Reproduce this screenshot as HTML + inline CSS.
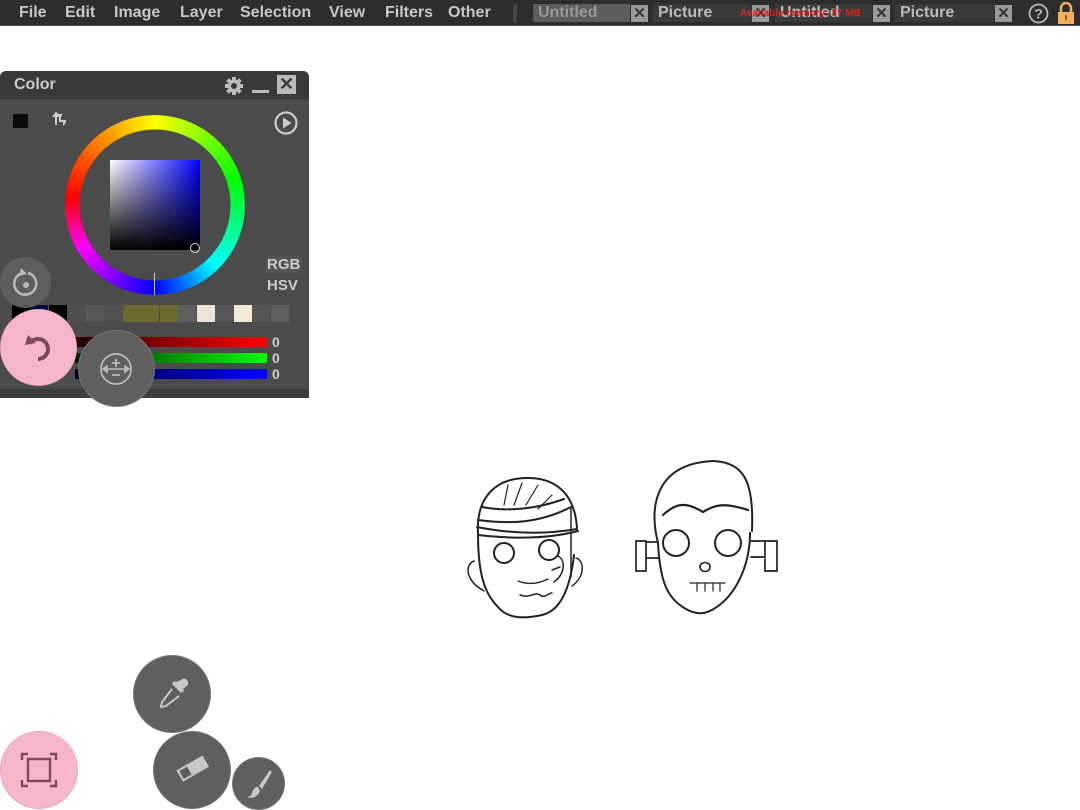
<!DOCTYPE html>
<html><head><meta charset="utf-8"><style>
*{margin:0;padding:0;box-sizing:border-box}
body{width:1080px;height:810px;background:#fff;position:relative;overflow:hidden;font-family:"Liberation Sans",sans-serif}
.bar{position:absolute;left:0;top:0;width:1080px;height:26px;background:#2d2d2d;border-bottom:1px solid #555}
.m{position:absolute;top:4px;color:#c8c8c8;font-size:16px;font-weight:bold}
.tab{position:absolute;top:4px;height:18px;color:#bbb;font-size:16px;font-weight:bold;padding-left:5px;line-height:18px}
.x{position:absolute;top:5px;width:17px;height:17px;background:#9a9a9a;color:#333;font-size:15px;line-height:17px;text-align:center;font-weight:bold}
.panel{position:absolute;left:0;top:71px;width:309px;height:327px;background:#4b4b4b;border-radius:6px 6px 0 0}
.ph{position:absolute;left:0;top:0;width:309px;height:28px;background:#393939;border-radius:6px 6px 0 0}
.c{position:absolute;border-radius:50%}
.sw{position:absolute;top:305px;width:18px;height:17px}
.sl{position:absolute;left:75px;width:192px;height:10px}
.n{position:absolute;left:272px;color:#ccc;font-size:14px;font-weight:bold}
</style></head><body>
<div class="bar">
<span class="m" style="left:19px">File</span>
<span class="m" style="left:65px">Edit</span>
<span class="m" style="left:114px">Image</span>
<span class="m" style="left:180px">Layer</span>
<span class="m" style="left:240px">Selection</span>
<span class="m" style="left:329px">View</span>
<span class="m" style="left:385px">Filters</span>
<span class="m" style="left:448px">Other</span>
<div style="position:absolute;left:513px;top:4px;width:4px;height:18px;background:#444"></div>
<div class="tab" style="left:533px;width:97px;background:#5c5c5c;color:#999">Untitled</div><div class="x" style="left:631px">✕</div>
<div class="tab" style="left:653px;width:98px;background:#3a3a3a">Picture</div><div class="x" style="left:752px">✕</div>
<div class="tab" style="left:775px;width:97px;background:#3a3a3a">Untitled</div><div class="x" style="left:873px">✕</div>
<div class="tab" style="left:895px;width:99px;background:#3a3a3a">Picture</div><div class="x" style="left:995px">✕</div>
<span style="position:absolute;left:740px;top:8px;color:#d22;font-size:10px;font-weight:bold">Available memory: 37 MB</span>
<svg style="position:absolute;left:1028px;top:3px" width="21" height="21"><circle cx="10.5" cy="10.5" r="9" fill="none" stroke="#bbb" stroke-width="1.8"/><text x="10.5" y="15.5" font-size="14" font-weight="bold" fill="#bbb" text-anchor="middle" font-family="Liberation Sans">?</text></svg>
<svg style="position:absolute;left:1057px;top:2px" width="18" height="22"><path d="M4 10V6a5 5 0 0 1 10 0v4" fill="none" stroke="#f0b060" stroke-width="2.5"/><rect x="1" y="10" width="16" height="12" fill="#f0b060"/><rect x="8" y="13" width="2" height="5" fill="#a06020"/></svg>
</div>

<div class="panel">
<div class="ph"></div>
<span style="position:absolute;left:14px;top:5px;color:#ccc;font-size:16px;font-weight:bold">Color</span>
<svg style="position:absolute;left:224px;top:5px" width="20" height="20" viewBox="0 0 20 20"><g fill="#bbb"><circle cx="10" cy="10" r="6.5"/><rect x="8" y="1" width="4" height="18"/><rect x="1" y="8" width="18" height="4"/><rect x="8" y="1" width="4" height="18" transform="rotate(45 10 10)"/><rect x="8" y="1" width="4" height="18" transform="rotate(-45 10 10)"/></g><circle cx="10" cy="10" r="3" fill="#393939"/></svg>
<div style="position:absolute;left:252px;top:19px;width:17px;height:3px;background:#bbb"></div>
<div style="position:absolute;left:277px;top:4px;width:19px;height:19px;background:#bbb;color:#393939;font-size:18px;line-height:19px;text-align:center;font-weight:bold">✕</div>
<div style="position:absolute;left:13px;top:43px;width:15px;height:14px;background:#0a0a0a"></div>
<svg style="position:absolute;left:52px;top:40px" width="18" height="16"><path d="M4 14V4h6M4 2L2 5h4zM8 4v6h6" fill="none" stroke="#ccc" stroke-width="2"/><path d="M14 12l-3-3v6z" fill="#ccc"/></svg>
<svg style="position:absolute;left:273px;top:39px" width="26" height="26"><circle cx="13" cy="13" r="10.5" fill="none" stroke="#ccc" stroke-width="2.2"/><path d="M10 7.5v11l8.5-5.5z" fill="#ccc"/></svg>
<div class="c" style="left:65px;top:44px;width:180px;height:180px;background:conic-gradient(#ff0 0deg,#0f0 72deg,#0ff 135deg,#00f 180deg,#f0f 240deg,#f00 275deg,#f80 320deg,#ff0 360deg);-webkit-mask:radial-gradient(circle,transparent 75px,#000 76px);mask:radial-gradient(circle,transparent 75px,#000 76px)"></div>
<div style="position:absolute;left:154px;top:202px;width:1px;height:22px;background:#ccc"></div>
<div style="position:absolute;left:110px;top:89px;width:90px;height:90px;background:linear-gradient(to bottom,transparent,#000),linear-gradient(to right,#fff,#00f)"></div>
<div class="c" style="left:190px;top:172px;width:10px;height:10px;border:1px solid #ddd"></div>
<span style="position:absolute;left:266px;top:185px;color:#ccc;font-size:15px;font-weight:bold;background:#555;padding:0 1px">RGB</span>
<span style="position:absolute;left:267px;top:206px;color:#ccc;font-size:15px;font-weight:bold">HSV</span>
<div class="sl" style="top:266px;background:linear-gradient(to right,#200,#f00)"></div>
<div class="sl" style="top:282px;background:linear-gradient(to right,#020,#0f0)"></div>
<div class="sl" style="top:298px;background:linear-gradient(to right,#002,#00f)"></div>
<span class="n" style="top:263px">0</span><span class="n" style="top:279px">0</span><span class="n" style="top:295px">0</span>
<div style="position:absolute;left:0;top:318px;width:309px;height:9px;background:#3c3c3c"></div>
</div>
<div class="sw" style="left:12px;background:#000"></div>
<div class="sw" style="left:30px;background:#0a0a40"></div>
<div class="sw" style="left:49px;background:#000"></div>
<div class="sw" style="left:67px;background:#4e4e4e"></div>
<div class="sw" style="left:86px;background:#585858"></div>
<div class="sw" style="left:104px;background:#525252"></div>
<div class="sw" style="left:123px;background:#6c6a2c"></div>
<div class="sw" style="left:141px;background:#6c6a2c"></div>
<div class="sw" style="left:160px;background:#6c6a2c"></div>
<div class="sw" style="left:178px;background:#5e5e5e"></div>
<div class="sw" style="left:197px;background:#efe2d6"></div>
<div class="sw" style="left:215px;background:#575757"></div>
<div class="sw" style="left:234px;background:#f5e8d4"></div>
<div class="sw" style="left:252px;background:#555"></div>
<div class="sw" style="left:271px;background:#5e5e5e"></div>

<!-- floating buttons -->
<div class="c" style="left:0;top:257px;width:51px;height:51px;background:rgba(95,95,95,.95)"></div>
<svg style="position:absolute;left:8px;top:265px" width="36" height="36"><path d="M12 9a11 11 0 1 0 8 -1" fill="none" stroke="#bbb" stroke-width="2.5"/><path d="M13 3l6 6-8 2z" fill="#bbb"/><circle cx="18" cy="20" r="3" fill="#bbb"/></svg>
<div class="c" style="left:0;top:309px;width:77px;height:77px;background:#f5b6cb;border:1px solid #e9a5bb"></div>
<svg style="position:absolute;left:22px;top:331px" width="34" height="34"><path d="M10 10a10 10 0 1 1 6 18" fill="none" stroke="#7a4a5c" stroke-width="4"/><path d="M3 14l3-10 8 8z" fill="#7a4a5c"/></svg>
<div class="c" style="left:78px;top:330px;width:77px;height:77px;background:#5f5f5f;border:1px solid #777"></div>
<svg style="position:absolute;left:96px;top:350px" width="40" height="38"><circle cx="20" cy="19" r="15" fill="none" stroke="#bbb" stroke-width="1.8"/><path d="M7 19h26M7 19l4-3v6zM33 19l-4-3v6z" stroke="#bbb" fill="#bbb" stroke-width="1.6"/><path d="M16 13h8M20 9v8M16 25h8" stroke="#bbb" stroke-width="1.8"/></svg>
<div class="c" style="left:133px;top:655px;width:78px;height:78px;background:#5f5f5f;border:1px solid #777"></div>
<svg style="position:absolute;left:155px;top:676px" width="36" height="36"><path d="M26 4a4 4 0 0 1 6 6l-4 3 1 2-3 2-9-9 2-3 2 1z" fill="#c8c8c8"/><path d="M17 13L7 26l-1 5 5-1 13-10" fill="none" stroke="#c8c8c8" stroke-width="2"/></svg>
<div class="c" style="left:0;top:731px;width:78px;height:78px;background:#f5b6cb;border:1px solid #e9a5bb"></div>
<svg style="position:absolute;left:20px;top:751px" width="38" height="38"><g fill="none" stroke="#7a4a5c" stroke-width="2.4"><path d="M2 9V3h6M30 3h6v6M36 29v6h-6M8 35H2v-6"/><rect x="8" y="8" width="22" height="22"/></g></svg>
<div class="c" style="left:153px;top:731px;width:78px;height:78px;background:#5f5f5f;border:1px solid #777"></div>
<svg style="position:absolute;left:174px;top:754px" width="38" height="30"><g transform="rotate(-30 19 15)"><rect x="4" y="8" width="30" height="13" fill="#c8c8c8"/><rect x="6" y="10" width="9" height="9" fill="#5f5f5f"/></g></svg>
<div class="c" style="left:232px;top:757px;width:53px;height:53px;background:#5f5f5f;border:1px solid #777"></div>
<svg style="position:absolute;left:244px;top:768px" width="30" height="32"><path d="M26 2L15 18l3 3L28 4z" fill="#c8c8c8"/><path d="M14 19c-4 0-5 3-6 6s-3 4-5 4c5 2 11 0 13-6z" fill="#c8c8c8"/></svg>

<!-- sketches -->
<svg style="position:absolute;left:460px;top:455px" width="330" height="170" viewBox="0 0 330 170" fill="none" stroke="#222" stroke-width="2" stroke-linecap="round">
<path d="M18 78C16 40 38 22 70 23c30 1 45 20 47 50"/>
<path d="M18 78c0 40 6 60 20 74 10 12 26 12 44 8 18-4 28-25 32-60"/>
<path d="M17 72c30 6 65 8 100 2M18 80c35 4 70 4 100-4M18 65c30 4 60 4 93 -13M22 52c25 5 55 2 82-8"/>
<path d="M48 30l-4 20M62 28l-8 22M78 30l-12 20M92 40l-14 14" stroke-width="1.2"/>
<path d="M111 52v70" stroke-width="1.5"/>
<circle cx="44" cy="98" r="10"/><circle cx="89" cy="95" r="10"/>
<path d="M98 101c8 4 7 18 -4 26M92 115l8-3" stroke-width="1.5"/>
<path d="M58 126c10 4 20 3 30-2" stroke-width="1.3"/>
<path d="M14 106c-10 4-8 20 10 30M116 103c8 2 10 18-4 28" stroke-width="1.5"/>
<path d="M60 140c10 4 15 -4 20 0s8 -2 12 -2" stroke-width="1.5"/>
<path d="M198 88c-10-40 0-80 56-82 30 2 40 20 38 70"/>
<path d="M198 88c2 40 10 56 28 66 14 8 24 4 36-6 16-14 28-40 28-70"/>
<path d="M203 60c15-14 25-12 40-3 12-7 20-10 45 -2" stroke-width="2.2"/>
<circle cx="216" cy="88" r="13"/><circle cx="268" cy="88" r="13"/>
<path d="M240 112c0-6 10-6 10 0s-10 6-10 0z" stroke-width="1.6"/>
<path d="M230 128h35M237 128v8M245 128v8M253 128v8M260 128v8" stroke-width="1.2"/>
<path d="M198 103h-12v-16h12M186 86h-10v30h10v-12" stroke-width="1.7"/>
<path d="M291 102h14v-16h-14M305 86h12v30h-12v-12" stroke-width="1.7"/>
</svg>
</body></html>
